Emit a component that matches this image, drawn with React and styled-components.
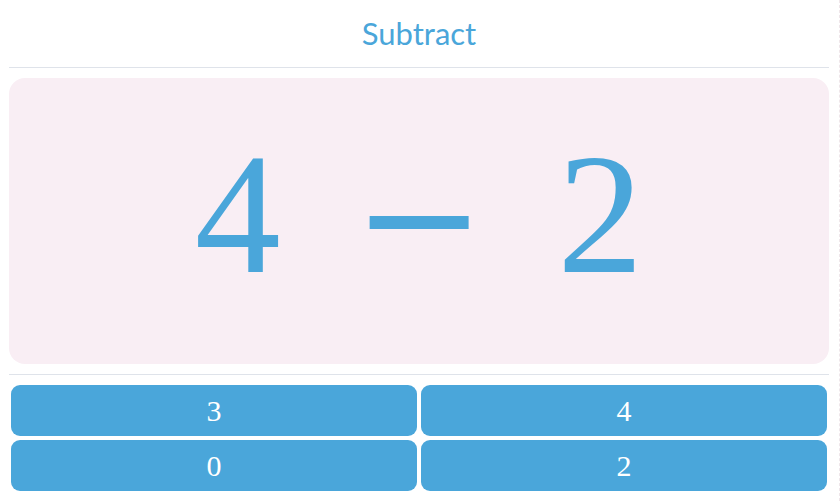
import React from 'react'
import styled, { createGlobalStyle } from 'styled-components'

const GlobalStyle = createGlobalStyle`
  html, body {
    margin: 0;
    padding: 0;
    background: #fff;
  }
  * {
    box-sizing: border-box;
  }
`

const Page = styled.div`
  width: 840px;
  min-height: 100vh;
  padding: 0 10px 0 9px;
  border-right: 1px dashed #efe6ea;
`

const Header = styled.header`
  padding: 15px 0 16px;
  border-bottom: 1px solid #dfe3ea;
  text-align: center;
`

const Title = styled.h1`
  margin: 0;
  font-family: Lato, "Liberation Sans", sans-serif;
  font-weight: 400;
  font-size: 31px;
  line-height: 36px;
  color: #4aa6da;
`

const Board = styled.section`
  padding: 10px 0;
  border-bottom: 1px solid #dfe3ea;
`

const Problem = styled.div`
  height: 286px;
  border-radius: 16px;
  background: #f9eef4;
  display: flex;
  align-items: center;
  justify-content: center;
  padding-bottom: 14px;
  color: #4aa6da;
`

const Expression = styled.div`
  font-family: "Liberation Serif", "Times New Roman", serif;
  font-size: 172px;
  line-height: 1;
  white-space: nowrap;
`

// the minus sign is set in a sans face for its heavier bar
const Operator = styled.span`
  font-family: "DejaVu Sans", sans-serif;
  font-size: 158px;
  margin: 0 72px;
`

const Answers = styled.div`
  display: grid;
  grid-template-columns: 1fr 1fr;
  grid-auto-rows: 51px;
  gap: 4px;
  padding: 10px 2px 0;
`

const Answer = styled.button`
  border: none;
  border-radius: 9px;
  background: #4aa6da;
  color: #fff;
  font-family: "Liberation Serif", "Times New Roman", serif;
  font-size: 30px;
  padding: 0;
  cursor: pointer;
`

const choices = [3, 4, 0, 2]

export default function App() {
  return (
    <Page>
      <GlobalStyle />
      <Header>
        <Title>Subtract</Title>
      </Header>
      <Board>
        <Problem>
          <Expression>
            4<Operator>&minus;</Operator>2
          </Expression>
        </Problem>
      </Board>
      <Answers>
        {choices.map((n, i) => (
          <Answer key={i}>{n}</Answer>
        ))}
      </Answers>
    </Page>
  )
}
